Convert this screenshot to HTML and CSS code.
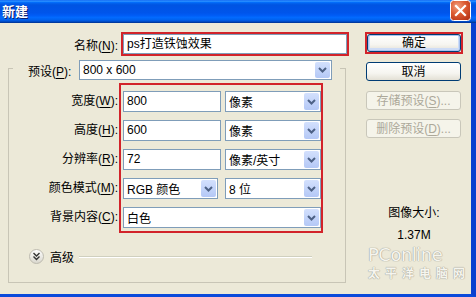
FILE: index.html
```html
<!DOCTYPE html>
<html lang="zh-CN">
<head>
  <meta charset="UTF-8" />
  <title>新建</title>
  <link rel="stylesheet" href="styles.css">
</head>
<body>
  <div class="window">
    <div class="titlebar">
      <span class="title">新建</span>
      <span class="close">
        <svg width="21" height="21" viewBox="0 0 21 21">
          <defs>
            <radialGradient id="cg" cx="35%" cy="30%" r="80%">
              <stop offset="0" stop-color="#F0A080"/>
              <stop offset="0.5" stop-color="#DD5A32"/>
              <stop offset="1" stop-color="#B8361A"/>
            </radialGradient>
          </defs>
          <rect x="0.5" y="0.5" width="20" height="20" rx="3" fill="url(#cg)" stroke="#fff"/>
          <path d="M6 6 L15 15 M15 6 L6 15" stroke="#fff" stroke-width="2.2" stroke-linecap="square"/>
        </svg>
      </span>
    </div>

    <div class="content">
      <div class="main">
        <div class="name-row">
          <label class="name-label">名称(<u>N</u>):</label>
          <div class="redbox name-box">
            <div class="input">ps打造铁蚀效果</div>
          </div>
        </div>

        <fieldset class="group">
          <legend class="preset-row">
            <label class="preset-label">预设(<u>P</u>):</label>
            <div class="select preset">
              <span>800 x 600</span>
              <span class="arrow"><svg width="9" height="6" viewBox="0 0 9 6"><path d="M1 1 L4.5 4.5 L8 1" fill="none" stroke="#4D6185" stroke-width="2"/></svg></span>
            </div>
          </legend>

          <div class="fields">
            <div class="labels">
              <label>宽度(<u>W</u>):</label>
              <label>高度(<u>H</u>):</label>
              <label>分辨率(<u>R</u>):</label>
              <label>颜色模式(<u>M</u>):</label>
              <label>背景内容(<u>C</u>):</label>
            </div>
            <div class="redbox grid">
              <div class="input">800</div>
              <div class="select">
                <span>像素</span>
                <span class="arrow"><svg width="9" height="6" viewBox="0 0 9 6"><path d="M1 1 L4.5 4.5 L8 1" fill="none" stroke="#4D6185" stroke-width="2"/></svg></span>
              </div>
              <div class="input">600</div>
              <div class="select">
                <span>像素</span>
                <span class="arrow"><svg width="9" height="6" viewBox="0 0 9 6"><path d="M1 1 L4.5 4.5 L8 1" fill="none" stroke="#4D6185" stroke-width="2"/></svg></span>
              </div>
              <div class="input">72</div>
              <div class="select">
                <span>像素/英寸</span>
                <span class="arrow"><svg width="9" height="6" viewBox="0 0 9 6"><path d="M1 1 L4.5 4.5 L8 1" fill="none" stroke="#4D6185" stroke-width="2"/></svg></span>
              </div>
              <div class="select mode">
                <span>RGB 颜色</span>
                <span class="arrow"><svg width="9" height="6" viewBox="0 0 9 6"><path d="M1 1 L4.5 4.5 L8 1" fill="none" stroke="#4D6185" stroke-width="2"/></svg></span>
              </div>
              <div class="select">
                <span>8 位</span>
                <span class="arrow"><svg width="9" height="6" viewBox="0 0 9 6"><path d="M1 1 L4.5 4.5 L8 1" fill="none" stroke="#4D6185" stroke-width="2"/></svg></span>
              </div>
              <div class="select wide">
                <span>白色</span>
                <span class="arrow"><svg width="9" height="6" viewBox="0 0 9 6"><path d="M1 1 L4.5 4.5 L8 1" fill="none" stroke="#4D6185" stroke-width="2"/></svg></span>
              </div>
            </div>
          </div>

          <div class="advanced">
            <span class="adv-btn">
              <svg width="15" height="15" viewBox="0 0 15 15">
                <defs>
                  <linearGradient id="ag" x1="0" y1="0" x2="0" y2="1">
                    <stop offset="0" stop-color="#FFFFFF"/>
                    <stop offset="1" stop-color="#D8D6CC"/>
                  </linearGradient>
                </defs>
                <circle cx="7.5" cy="7.5" r="7" fill="url(#ag)" stroke="#BDBAAE"/>
                <path d="M4.5 4 L7.5 7 L10.5 4 M4.5 7.5 L7.5 10.5 L10.5 7.5" fill="none" stroke="#333" stroke-width="1.4"/>
              </svg>
            </span>
            <span class="adv-text">高级</span>
            <span class="adv-line"></span>
          </div>
        </fieldset>
      </div>

      <div class="side">
        <div class="redbox ok-box">
          <button class="btn default">确定</button>
        </div>
        <button class="btn cancel">取消</button>
        <button class="btn save" disabled>存储预设(<u>S</u>)...</button>
        <button class="btn delete" disabled>删除预设(<u>D</u>)...</button>
        <div class="size-label">图像大小:</div>
        <div class="size-value">1.37M</div>
        <div class="watermark">
          <div class="wm-logo">PConline</div>
          <div class="wm-cn">太平洋电脑网</div>
        </div>
      </div>
    </div>
  </div>
</body>
</html>
```

FILE: styles.css
```css
body, html {
  margin: 0;
  padding: 0;
}
body {
  width: 476px;
  height: 297px;
  overflow: hidden;
  background: #ECE9D8;
  font-family: "Liberation Sans", "Noto Sans CJK SC", sans-serif;
  font-size: 12px;
  color: #000;
}
u {
  text-decoration: underline;
  text-underline-offset: 2px;
}
.window {
  display: flex;
  flex-direction: column;
  height: 297px;
}
.titlebar {
  height: 23px;
  display: flex;
  justify-content: space-between;
  padding: 0 5px 0 2px;
  background: linear-gradient(to bottom, #0058EE 0%, #3593FF 4%, #288EFF 6%, #127DFF 8%, #036FFC 10%, #0262EE 14%, #0057E5 20%, #0054E3 24%, #0055EB 56%, #005BF5 66%, #026AFE 76%, #0062EF 86%, #0052D6 92%, #0040AB 96%, #003092 100%);
}
.title {
  color: #fff;
  font-weight: bold;
  font-size: 13px;
  line-height: 23px;
  text-shadow: 1px 1px 0 #0A1E6E;
}
.close {
  display: flex;
  height: 21px;
}
.content {
  flex: 1;
  display: flex;
  padding: 9px 0 0 8px;
  border-right: 5px solid #0A3FCF;
  border-bottom: 3px solid #0A4ADB;
}
.main {
  width: 341px;
}
.side {
  width: 98px;
  margin-left: 16px;
  display: flex;
  flex-direction: column;
}

.redbox {
  border: 2px solid #D2232A;
}
.input {
  height: 21px;
  box-sizing: border-box;
  border: 1px solid #7F9DB9;
  background: #fff;
  padding: 0 3px;
  line-height: 19px;
  white-space: nowrap;
}
.select {
  height: 21px;
  box-sizing: border-box;
  border: 1px solid #7F9DB9;
  background: #fff;
  padding-left: 3px;
  display: flex;
  align-items: center;
  justify-content: space-between;
  white-space: nowrap;
}
.arrow {
  width: 15px;
  height: 17px;
  margin: 1px;
  border-radius: 2px;
  background: linear-gradient(to bottom, #D3E0FD, #B4C8F6);
  display: flex;
  align-items: center;
  justify-content: center;
}

.name-row {
  display: flex;
  align-items: center;
  height: 24px;
}
.name-label {
  width: 110px;
  margin-right: 3px;
  text-align: right;
}
.name-box {
  width: 224px;
}
.name-box .input {
  height: 20px;
  line-height: 18px;
}

.group {
  margin: 0 3px 0 0;
  padding: 0 0 18px;
  border: 1px solid #C8C5B6;
  min-width: 0;
}
.preset-row {
  display: flex;
  align-items: center;
  margin-left: 4px;
  padding: 4px 8px 0 0;
}
.preset-label {
  width: 51px;
  padding-left: 15px;
}
.select.preset {
  width: 253px;
  height: 20px;
}
.select.preset .arrow {
  height: 16px;
}

.fields {
  display: flex;
  margin-top: 3px;
}
.labels {
  width: 109px;
  padding: 8px 1px 0 0;
  display: flex;
  flex-direction: column;
  gap: 8px;
  text-align: right;
}
.labels label {
  height: 21px;
  line-height: 21px;
}
.grid {
  display: grid;
  grid-template-columns: 98px 96px;
  grid-auto-rows: 21px;
  column-gap: 4px;
  row-gap: 8px;
  padding: 6px 0 3px 2px;
}
.select.mode {
  width: 95px;
}
.select.wide {
  grid-column: 1 / 3;
}

.advanced {
  display: flex;
  align-items: center;
  margin-top: 16px;
  padding-left: 20px;
  height: 15px;
}
.adv-btn {
  display: flex;
}
.adv-text {
  margin-left: 6px;
}
.adv-line {
  flex: 1;
  margin: 0 33px 0 5px;
  border-top: 1px solid #D0D0BF;
  border-bottom: 1px solid #fff;
}

.btn {
  font-family: "Liberation Sans", "Noto Sans CJK SC", sans-serif;
  font-size: 12px;
  color: #000;
  height: 19px;
  width: 95px;
  padding: 0;
  border: 1px solid #003C74;
  border-radius: 3px;
  background: linear-gradient(to bottom, #FFFFFF 0%, #F6F5F0 60%, #E3E0D5 100%);
  line-height: 16px;
}
.ok-box {
  display: flex;
}
.btn.default {
  width: 94px;
  height: 18px;
  box-shadow: inset 0 0 0 1px #A8C3F0, inset 0 -1px 0 2px #CEDCF6;
}
.btn.cancel {
  margin: 8px 0 0 1px;
}
.btn.save {
  margin: 10px 0 0 1px;
}
.btn.delete {
  margin: 9px 0 0 1px;
}
.btn:disabled {
  color: #ACA899;
  border-color: #C9C7BA;
  background: #F5F4EA;
}
.size-label {
  margin-top: 68px;
  text-align: center;
  line-height: 14px;
}
.size-value {
  margin-top: 8px;
  text-align: center;
  line-height: 14px;
}
.watermark {
  margin-top: 5px;
  padding-left: 3px;
  color: #F6F5EE;
  text-shadow: 0 0 1px #9C9A90, 0 0 1px #9C9A90;
}
.wm-logo {
  font-family: "DejaVu Sans", sans-serif;
  font-size: 18px;
  line-height: 16px;
  letter-spacing: -0.5px;
}
.wm-cn {
  margin-top: 3px;
  font-family: "Noto Sans CJK SC", sans-serif;
  font-size: 12px;
  font-weight: bold;
  line-height: 13px;
  letter-spacing: 5px;
  white-space: nowrap;
}
```
